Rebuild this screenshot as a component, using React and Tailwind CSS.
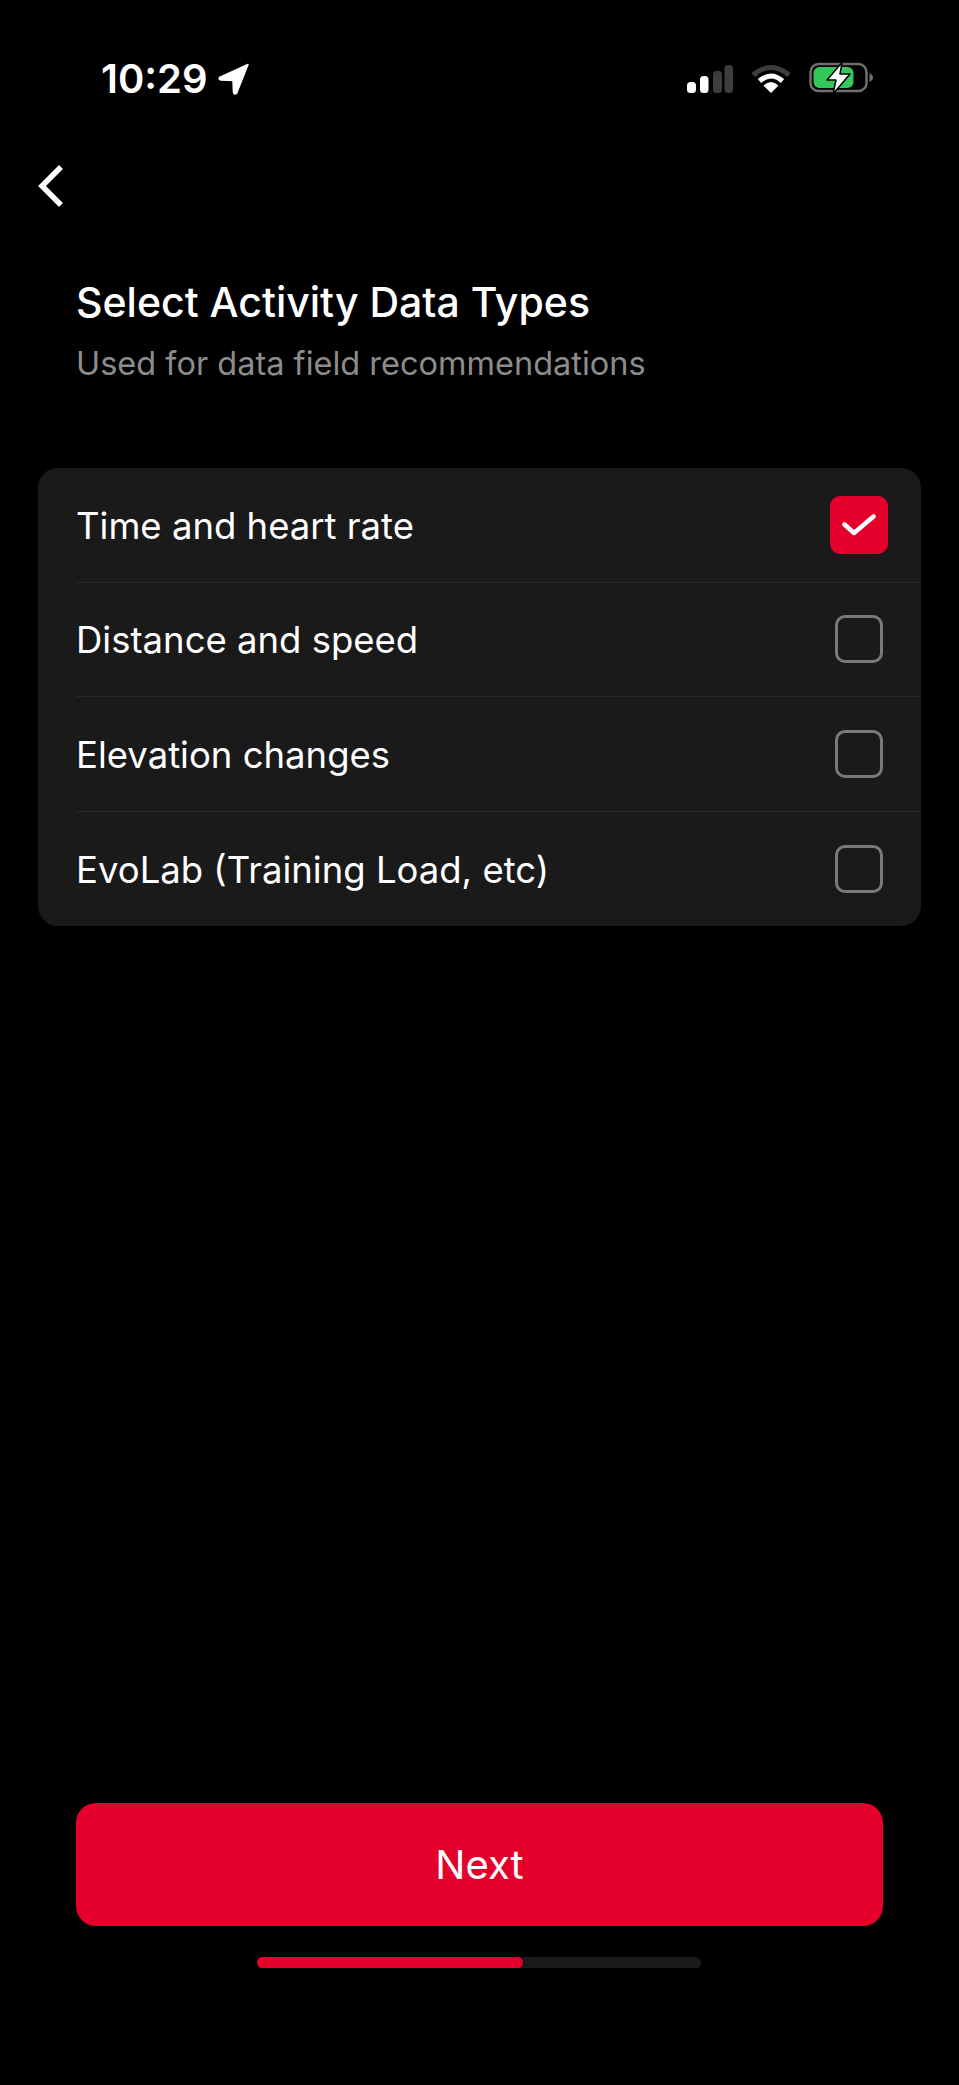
import React from 'react'

const rows = [
  { label: 'Time and heart rate', checked: true },
  { label: 'Distance and speed' },
  { label: 'Elevation changes' },
  { label: 'EvoLab (Training Load, etc)' },
]

function StatusBar() {
  return (
    <div className="flex h-[72px] items-center justify-between pl-[101px] pr-[84px] pt-[6px]">
      <div className="flex items-center gap-[10px]">
        <span className="text-[40px] font-semibold leading-none text-white">10:29</span>
        <svg width="32" height="32" viewBox="0 0 32 32">
          <path d="M30 1.5 L1.5 14.5 Q0.5 16.5 3 17 L15 17.5 L15.5 29.5 Q16.5 32 18.5 30.5 Z" fill="#fff" stroke="#fff" strokeWidth="1.5" strokeLinejoin="round" />
        </svg>
      </div>
      <div className="flex items-center gap-[18px]">
        <svg width="48" height="30" viewBox="0 0 48 30">
          <rect x="2" y="18" width="9" height="11" rx="3.5" fill="#fff" />
          <rect x="15" y="12" width="8.5" height="17" rx="3.5" fill="#fff" />
          <rect x="28" y="7" width="9" height="22" rx="3.5" fill="#3d3d3d" />
          <rect x="39.5" y="1" width="8.5" height="28" rx="3.5" fill="#3d3d3d" />
        </svg>
        <svg width="40" height="30" viewBox="0 0 40 30">
          <path d="M2 11 Q20 -4 38 11" fill="none" stroke="#3d3d3d" strokeWidth="5" />
          <path d="M8.5 17 Q20 7 31.5 17" fill="none" stroke="#fff" strokeWidth="5" />
          <path d="M12.5 21.5 Q20 14.5 27.5 21.5 L20 29 Z" fill="#fff" />
        </svg>
        <svg width="66" height="34" viewBox="0 0 66 34">
          <rect x="1.5" y="2" width="56" height="27" rx="8" fill="none" stroke="#6f6f6f" strokeWidth="2.5" />
          <rect x="4.5" y="5" width="40" height="21" rx="6" fill="#34c759" />
          <path d="M60.5 11 Q64 13 64 15.5 Q64 18 60.5 20 Z" fill="#6f6f6f" />
          <path d="M33 0.5 L18 18 L27 18 L24 32 L41 12 L31 12 Z" fill="#fff" stroke="#000" strokeWidth="1.5" strokeLinejoin="round" />
        </svg>
      </div>
    </div>
  )
}

function Checkbox({ checked }) {
  if (checked) {
    return (
      <div className="flex h-[58px] w-[58px] items-center justify-center rounded-[10px] bg-[#e4002b]">
        <svg width="34" height="26" viewBox="0 0 34 26">
          <path d="M2.5 12.5 L12 21 L31.5 4.5" fill="none" stroke="#fff" strokeWidth="4.5" strokeLinecap="round" strokeLinejoin="round" />
        </svg>
      </div>
    )
  }
  return <div className="h-[48px] w-[48px] rounded-[10px] border-[3px] border-[#7a7a7a]" />
}

export default function App() {
  return (
    <div className="flex h-[2085px] w-[959px] flex-col bg-black pt-[40px] font-['Inter','Liberation_Sans',sans-serif] text-white">
      <StatusBar />

      <div className="mt-[52px] pl-[35px]">
        <svg width="30" height="44" viewBox="0 0 30 44">
          <path d="M24 5 L7 22 L24 39" fill="none" stroke="#fff" strokeWidth="5.5" strokeLinecap="square" />
        </svg>
      </div>

      <div className="mt-[70px] px-[76px]">
        <h1 className="text-[41px] font-medium leading-[48px]">Select Activity Data Types</h1>
        <p className="mt-[18px] text-[32.5px] leading-[40px] text-[#8c8c8c]">Used for data field recommendations</p>
      </div>

      <div className="mx-[38px] mt-[84px] rounded-[20px] bg-[#1a1a1a]">
        {rows.map((row, i) => (
          <div key={row.label} className="pl-[38px]">
            <div className={`flex h-[114.5px] items-center justify-between ${i < rows.length - 1 ? 'border-b border-[#282828]' : ''}`}>
              <span className="pt-[2px] text-[36.5px] leading-none">{row.label}</span>
              <div className="mr-[33px] flex w-[58px] justify-center">
                <Checkbox checked={row.checked} />
              </div>
            </div>
          </div>
        ))}
      </div>

      <div className="mt-auto px-[76px]">
        <button className="flex h-[123px] w-full items-center justify-center rounded-[20px] bg-[#e4002b] text-[40px] text-white">Next</button>
      </div>
      <div className="mb-[117px] mt-[31px] flex justify-center pr-[2px]">
        <div className="h-[11px] w-[444px] rounded-full bg-[#1a1a1a]">
          <div className="h-full w-[266px] rounded-full bg-[#e4002b]" />
        </div>
      </div>
    </div>
  )
}
